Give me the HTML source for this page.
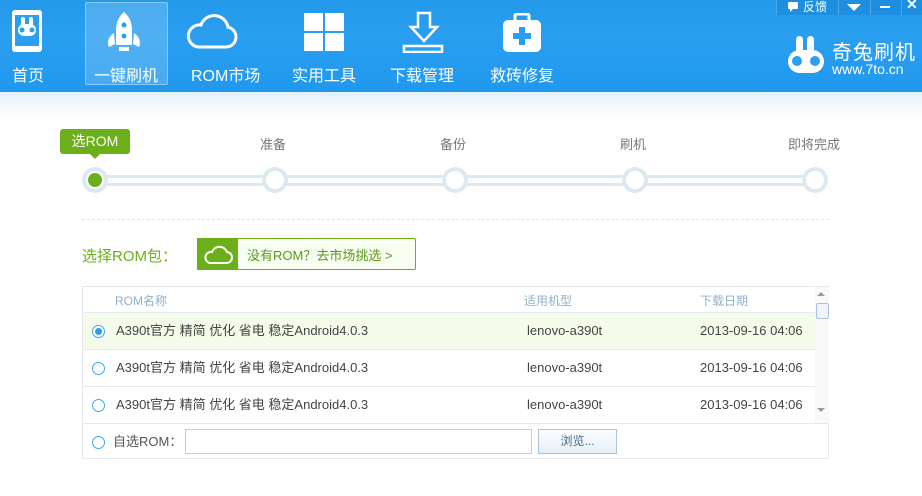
<!DOCTYPE html>
<html><head><meta charset="utf-8"><style>
*{margin:0;padding:0;box-sizing:border-box}
body{width:922px;height:496px;overflow:hidden;background:#fff;font-family:"Liberation Sans","Noto Sans CJK SC",sans-serif;position:relative}
.hdr{position:absolute;left:0;top:0;width:922px;height:92px;background:linear-gradient(#2399ea,#2a9ff0 40%,#1f98ee)}
.fade{position:absolute;left:0;top:92px;width:922px;height:28px;background:linear-gradient(#e3f1fb,#fff)}
.nav{position:absolute;top:62px;color:#fff;font-size:16px;white-space:nowrap}
.sel{position:absolute;left:85px;top:2px;width:83px;height:83px;background:rgba(255,255,255,.18);border:1px solid rgba(255,255,255,.35);border-radius:2px}
.tb{position:absolute;top:0;height:15px;background:#1d8fe0;border-left:1px solid #4aa8ec}
.t{position:absolute;font-size:13px;color:#777}
.dot{position:absolute;top:167px;width:26px;height:26px;border-radius:50%;background:#dce9f1}
.dot i{position:absolute;left:4px;top:4px;width:18px;height:18px;border-radius:50%;background:#fff}
.tbl{position:absolute;left:82px;top:286px;width:747px;height:173px;border:1px solid #e3e9ee}
.row{position:absolute;left:0;width:732px;height:37px;border-top:1px solid #e3e9ee;font-size:13px;color:#444}
.row span{position:absolute;top:10px;line-height:16px;height:16px}
.rad{position:absolute;left:9px;top:12px;width:13px;height:13px;border-radius:50%;border:1px solid #3aa9f0;background:#fff}
</style></head><body>
<div class="hdr"></div>
<div class="fade"></div>
<div class="sel"></div>
<svg style="position:absolute;left:11px;top:9px" width="32" height="44" viewBox="0 0 32 44"><rect x="1" y="1" width="30" height="42" rx="3" fill="#fff"/><rect x="4" y="6" width="24" height="31" fill="#2a9ff0"/><rect x="10" y="8" width="4" height="10" rx="2" fill="#fff"/><rect x="18" y="8" width="4" height="10" rx="2" fill="#fff"/><rect x="7" y="15" width="18" height="12" rx="6" fill="#fff"/><circle cx="11" cy="21" r="2.5" fill="#2a9ff0"/><circle cx="21" cy="21" r="2.5" fill="#2a9ff0"/></svg>
<div class="nav" style="left:12px">首页</div>
<svg style="position:absolute;left:104px;top:11px" width="40" height="42" viewBox="0 0 40 42"><path d="M20 1C13 7 12 14 12 20v14h16V20c0-6-1-13-8-19z" fill="#fff"/><circle cx="20" cy="14" r="2.5" fill="#2a9ff0"/><circle cx="20" cy="25" r="2.5" fill="#2a9ff0"/><path d="M10 22C4 26 3 32 5 36l6-3z M30 22c6 4 7 10 5 14l-6-3z" fill="#fff"/><rect x="15" y="36" width="10" height="4" fill="#fff"/></svg>
<div class="nav" style="left:94px">一键刷机</div>
<svg style="position:absolute;left:186px;top:12px" width="52" height="38" viewBox="0 0 52 38"><path d="M12 35h28a10 10 0 0 0 2-19.8A14 14 0 0 0 15 13a11 11 0 0 0-3 22z" fill="none" stroke="#fff" stroke-width="3"/></svg>
<div class="nav" style="left:191px">ROM市场</div>
<svg style="position:absolute;left:304px;top:13px" width="40" height="38"><rect x="0" y="0" width="19" height="18" fill="#fff"/><rect x="21" y="0" width="19" height="18" fill="#fff"/><rect x="0" y="20" width="19" height="18" fill="#fff"/><rect x="21" y="20" width="19" height="18" fill="#fff"/></svg>
<div class="nav" style="left:292px">实用工具</div>
<svg style="position:absolute;left:402px;top:11px" width="44" height="42" viewBox="0 0 44 42"><path d="M16 2h12v14h7L22 30 9 16h7z" fill="none" stroke="#fff" stroke-width="2.5"/><rect x="2" y="35" width="38" height="6" fill="none" stroke="#fff" stroke-width="2.5"/></svg>
<div class="nav" style="left:390px">下载管理</div>
<svg style="position:absolute;left:502px;top:13px" width="40" height="40" viewBox="0 0 40 40"><rect x="13" y="1" width="14" height="8" rx="2" fill="none" stroke="#fff" stroke-width="3"/><rect x="1" y="7" width="38" height="32" rx="5" fill="#fff"/><path d="M17 14h6v6h6v6h-6v6h-6v-6h-6v-6h6z" fill="#2a9ff0"/></svg>
<div class="nav" style="left:490px">救砖修复</div>
<div class="tb" style="left:776px;width:62px"></div>
<div class="tb" style="left:838px;width:32px"></div>
<div class="tb" style="left:870px;width:31px"></div>
<div class="tb" style="left:901px;width:21px"></div>
<svg style="position:absolute;left:787px;top:1px" width="12" height="12"><rect x="1" y="1" width="10" height="7" rx="1" fill="#fff"/><path d="M3 8v3l3-3z" fill="#fff"/></svg>
<div style="position:absolute;left:803px;top:-2px;color:#fff;font-size:12px">反馈</div>
<svg style="position:absolute;left:847px;top:4px" width="14" height="8"><path d="M0 0h14L7 7z" fill="#fff"/></svg>
<div style="position:absolute;left:880px;top:6px;width:10px;height:2px;background:#fff"></div>
<div style="position:absolute;left:906px;top:-4px;color:#fff;font-size:14px;font-weight:bold">✕</div>
<svg style="position:absolute;left:787px;top:36px" width="38" height="38" viewBox="0 0 38 38"><rect x="9" y="0" width="7" height="20" rx="3.5" fill="#fff"/><rect x="20" y="0" width="7" height="20" rx="3.5" fill="#fff"/><rect x="1" y="14" width="36" height="23" rx="11.5" fill="#fff"/><circle cx="10" cy="25" r="5" fill="#2a9ff0"/><circle cx="28" cy="25" r="5" fill="#2a9ff0"/></svg>
<div style="position:absolute;left:832px;top:36px;color:#fff;font-size:20px;letter-spacing:1px">奇兔刷机</div>
<div style="position:absolute;left:832px;top:61px;color:#fff;font-size:14px">www.7to.cn</div>
<div style="position:absolute;left:60px;top:129px;width:70px;height:25px;background:#6bb01b;border-radius:3px;color:#fff;font-size:14px;text-align:center;line-height:25px">选ROM</div>
<div style="position:absolute;left:90px;top:154px;border:5px solid transparent;border-top-color:#6bb01b;border-bottom:0"></div>
<div class="t" style="left:260px;top:134px">准备</div>
<div class="t" style="left:440px;top:134px">备份</div>
<div class="t" style="left:620px;top:134px">刷机</div>
<div class="t" style="left:788px;top:134px">即将完成</div>
<div style="position:absolute;left:90px;top:175px;width:730px;height:11px;background:#dce9f1"></div>
<div style="position:absolute;left:92px;top:178px;width:726px;height:5px;background:#fff"></div>
<div class="dot" style="left:82px"><i></i></div>
<div style="position:absolute;left:88px;top:173px;width:14px;height:14px;border-radius:50%;background:#6bb01b"></div>
<div class="dot" style="left:262px"><i></i></div>
<div class="dot" style="left:442px"><i></i></div>
<div class="dot" style="left:622px"><i></i></div>
<div class="dot" style="left:802px"><i></i></div>
<div style="position:absolute;left:82px;top:219px;width:747px;border-top:1px dashed #dde3e8"></div>
<div style="position:absolute;left:82px;top:245px;font-size:15px;color:#6bb01b">选择ROM包：</div>
<div style="position:absolute;left:197px;top:238px;width:219px;height:32px;border:1px solid #6bb01b;background:#f7fdf0;border-radius:2px"></div>
<div style="position:absolute;left:197px;top:238px;width:41px;height:32px;background:#6bb01b"></div>
<svg style="position:absolute;left:203px;top:245px" width="30" height="20" viewBox="0 0 30 20"><path d="M7 18h16a5.5 5.5 0 0 0 1-11A8 8 0 0 0 9 7a5.5 5.5 0 0 0-2 11z" fill="none" stroke="#fff" stroke-width="2"/></svg>
<div style="position:absolute;left:247px;top:245px;font-size:13px;color:#5a9a18">没有ROM？去市场挑选 &gt;</div>
<div class="tbl">
<div style="position:absolute;left:32px;top:5px;font-size:12px;color:#8fb0c8">ROM名称</div>
<div style="position:absolute;left:441px;top:5px;font-size:12px;color:#8fb0c8">适用机型</div>
<div style="position:absolute;left:617px;top:5px;font-size:12px;color:#8fb0c8">下载日期</div>
<div class="row" style="top:25px;background:#f4fbea"><div class="rad"><i style="position:absolute;left:2px;top:2px;width:7px;height:7px;border-radius:50%;background:#2b9de8"></i></div><span style="left:33px">A390t官方 精简 优化 省电 稳定Android4.0.3</span><span style="left:444px">lenovo-a390t</span><span style="left:617px">2013-09-16 04:06</span></div>
<div class="row" style="top:62px"><div class="rad"></div><span style="left:33px">A390t官方 精简 优化 省电 稳定Android4.0.3</span><span style="left:444px">lenovo-a390t</span><span style="left:617px">2013-09-16 04:06</span></div>
<div class="row" style="top:99px"><div class="rad"></div><span style="left:33px">A390t官方 精简 优化 省电 稳定Android4.0.3</span><span style="left:444px">lenovo-a390t</span><span style="left:617px">2013-09-16 04:06</span></div>
<div style="position:absolute;left:732px;top:0;width:14px;height:136px;background:#f6f8fa"></div>
<div style="position:absolute;left:734px;top:2px;border:4px solid transparent;border-bottom-color:#999;border-top:0;margin-top:3px"></div>
<div style="position:absolute;left:733px;top:16px;width:13px;height:16px;border:1px solid #a9c3dc;background:#eef4fa;border-radius:2px"></div>
<div style="position:absolute;left:734px;top:121px;border:4px solid transparent;border-top-color:#999;border-bottom:0"></div>
<div class="row" style="top:136px;width:745px"><div class="rad"></div><span style="left:30px;color:#555">自选ROM：</span>
<div style="position:absolute;left:102px;top:5px;width:347px;height:25px;border:1px solid #ccc;background:#fff"></div>
<div style="position:absolute;left:455px;top:5px;width:79px;height:25px;border:1px solid #a9c3dc;background:linear-gradient(#fbfdff,#e5eef7);font-size:12px;color:#4a6a8a;text-align:center;line-height:23px">浏览...</div></div>
</div>
</body></html>
